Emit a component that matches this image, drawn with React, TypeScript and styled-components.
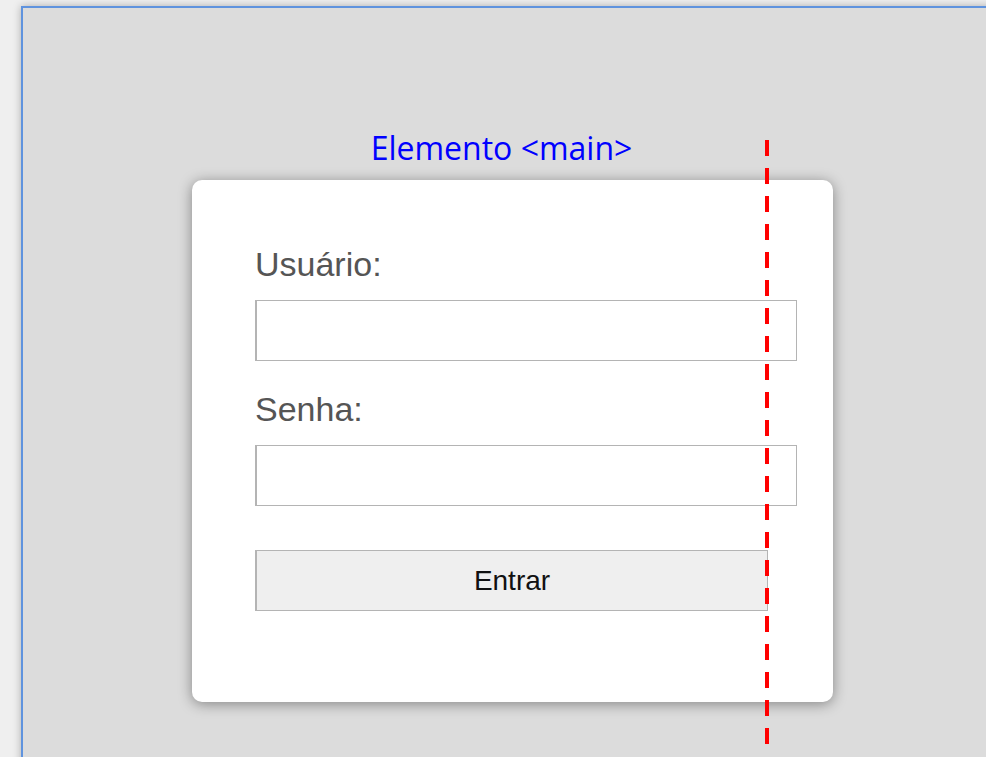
import styled, { createGlobalStyle } from 'styled-components'

const GlobalStyle = createGlobalStyle`
  html, body {
    margin: 0;
    padding: 0;
    background: #efefef;
    overflow: hidden;
  }
  * {
    box-sizing: border-box;
  }
`

const App = () => {
  return (
    <>
      <GlobalStyle />
      <Page>
        <Frame>
          <Caption>Elemento &lt;main&gt;</Caption>
          <Card>
            <Label htmlFor="usuario">Usuário:</Label>
            <Input id="usuario" type="text" />
            <Label htmlFor="senha">Senha:</Label>
            <Input id="senha" type="password" />
            <Button type="button">Entrar</Button>
          </Card>
          <Guide />
        </Frame>
      </Page>
    </>
  )
}

export default App

const Page = styled.div`
  width: 986px;
  height: 757px;
  padding: 6px 0 0 21px;
  overflow: hidden;
`

const Frame = styled.div`
  position: relative;
  width: 980px;
  height: 780px;
  background: #dcdcdc;
  border-top: 2px solid #5f93de;
  border-left: 2px solid #5f93de;
  box-shadow: 0 0 8px rgba(0, 0, 0, 0.28);
  padding: 120px 0 0 169px;
  display: flex;
  flex-direction: column;
  align-items: flex-start;
`

const Caption = styled.div`
  width: 641px;
  padding-right: 22px;
  text-align: center;
  font-family: 'Open Sans', 'Noto Sans', sans-serif;
  font-size: 32px;
  line-height: 40px;
  color: #0000ff;
  margin-bottom: 12px;
`

const Card = styled.form`
  width: 641px;
  height: 522px;
  background: #ffffff;
  border-radius: 10px;
  box-shadow: 0 2px 14px rgba(0, 0, 0, 0.4);
  padding: 65px 0 0 63px;
  display: flex;
  flex-direction: column;
  align-items: flex-start;
  font-family: 'Liberation Sans', Arial, sans-serif;
`

const Label = styled.label`
  font-size: 34px;
  line-height: 39px;
  color: #555555;
  margin-bottom: 16px;
`

const Input = styled.input`
  width: 542px;
  height: 61px;
  border: 1px solid #b4b4b4;
  border-left-width: 2px;
  background: #ffffff;
  margin: 0 0 29px 0;
  padding: 0 8px;
  font-size: 24px;
  outline: none;
`

const Button = styled.button`
  width: 513px;
  height: 61px;
  margin-top: 15px;
  background: #efefef;
  border: 1px solid #b4b4b4;
  border-left-width: 2px;
  font-family: 'Liberation Sans', Arial, sans-serif;
  font-size: 28px;
  color: #111111;
  padding: 0;
`

// dashed marker drawn over the card
const Guide = styled.div`
  position: absolute;
  left: 742px;
  top: 132px;
  width: 4px;
  height: 606px;
  background: repeating-linear-gradient(
    to bottom,
    #ff0000 0,
    #ff0000 16px,
    transparent 16px,
    transparent 28px
  );
`
